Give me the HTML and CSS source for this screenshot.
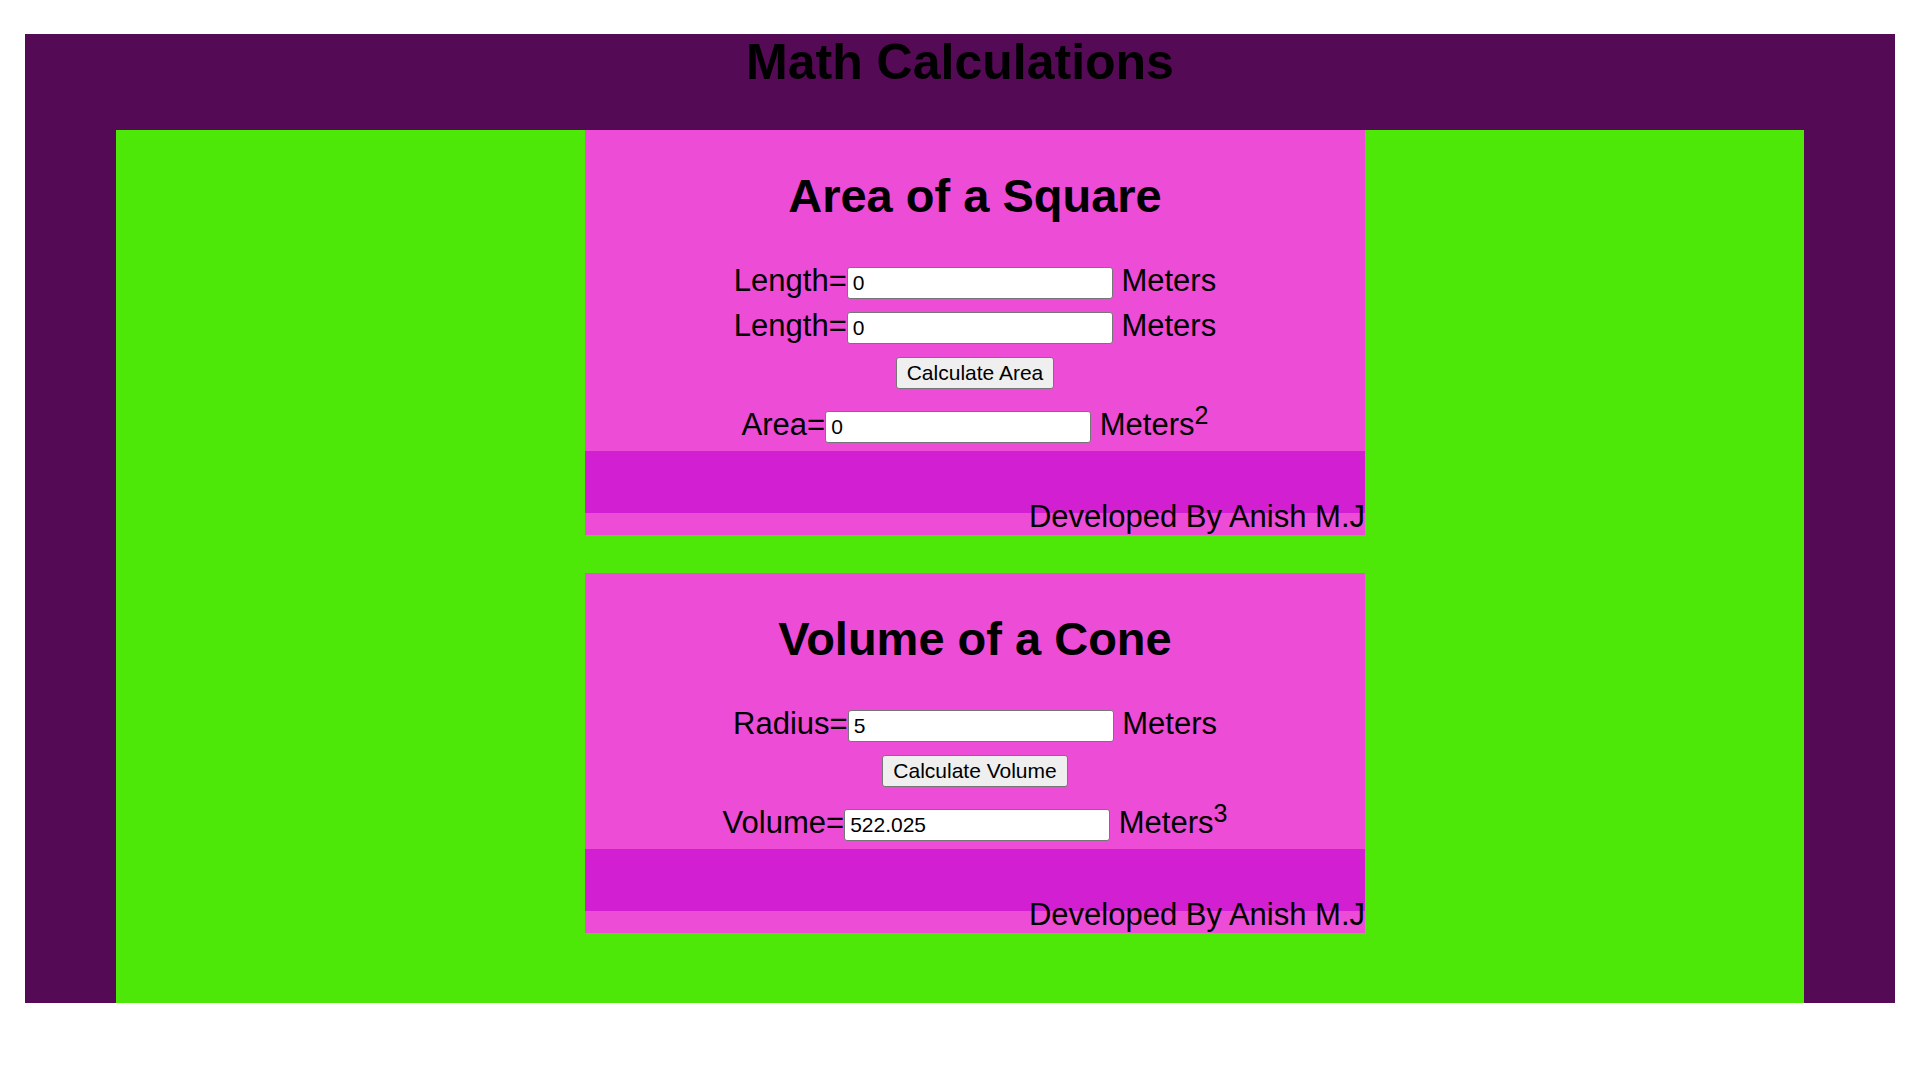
FILE: index.html
```html
<!DOCTYPE html>
<html lang="en">
<head>
<meta charset="utf-8">
<title>Math Calculations</title>
<link rel="stylesheet" href="styles.css">
</head>
<body>
<div class="page">
  <h1 class="title">Math Calculations</h1>
  <div class="stage">
    <section class="card">
      <h2 class="card-title">Area of a Square</h2>
      <div class="row">Length=<input class="field" type="text" value="0"> Meters</div>
      <div class="row">Length=<input class="field" type="text" value="0"> Meters</div>
      <div class="row"><button class="btn" type="button">Calculate Area</button></div>
      <div class="row result">Area=<input class="field" type="text" value="0"> Meters<sup class="exp">2</sup></div>
      <div class="bar"></div>
      <p class="credit">Developed By Anish M.J</p>
    </section>
    <section class="card card-next">
      <h2 class="card-title">Volume of a Cone</h2>
      <div class="row">Radius=<input class="field" type="text" value="5"> Meters</div>
      <div class="row"><button class="btn" type="button">Calculate Volume</button></div>
      <div class="row result">Volume=<input class="field" type="text" value="522.025"> Meters<sup class="exp">3</sup></div>
      <div class="bar"></div>
      <p class="credit">Developed By Anish M.J</p>
    </section>
  </div>
</div>
</body>
</html>
```
FILE: styles.css
```css
html, body {
  margin: 0;
  padding: 0;
  background: #ffffff;
}

body {
  font-family: "Liberation Sans", Arial, sans-serif;
  color: #000000;
}

.page {
  margin: 34px 25px 0;
  background: #550a55;
}

.title {
  margin: 0 0 38.5px;
  font-size: 50px;
  font-weight: bold;
  line-height: 57.5px;
  text-align: center;
}

.stage {
  margin: 0 91px;
  padding: 0 0 70px 30px;
  background: #4de808;
}

.card {
  width: 780px;
  margin: 0 auto;
  padding-top: 38px;
  background: #ec4cd6;
}

.card-next {
  margin-top: 38px;
}

.card-title {
  margin: 0 0 34px;
  font-size: 47px;
  font-weight: bold;
  line-height: 56px;
  text-align: center;
}

.row {
  height: 45px;
  font-size: 31px;
  line-height: 45px;
  text-align: center;
  white-space: nowrap;
}

.row.result {
  margin-top: 9px;
}

.field {
  box-sizing: border-box;
  width: 266px;
  height: 32px;
  margin: 0;
  padding: 0 5px;
  border: 1px solid #767676;
  border-radius: 3px;
  background: #ffffff;
  font-family: "Liberation Sans", Arial, sans-serif;
  font-size: 21px;
  color: #000000;
  vertical-align: middle;
}

.btn {
  box-sizing: border-box;
  height: 32px;
  margin: 0;
  padding: 0 10px;
  border: 1px solid #767676;
  border-radius: 3px;
  background: #efefef;
  font-family: "Liberation Sans", Arial, sans-serif;
  font-size: 21px;
  color: #000000;
  vertical-align: middle;
}

.exp {
  font-size: 25px;
  line-height: 0;
}

.bar {
  height: 62px;
  margin-top: 4px;
  background: #d31fd2;
}

.credit {
  margin: -14px 0 0;
  font-size: 31px;
  line-height: normal;
  text-align: right;
}
```
